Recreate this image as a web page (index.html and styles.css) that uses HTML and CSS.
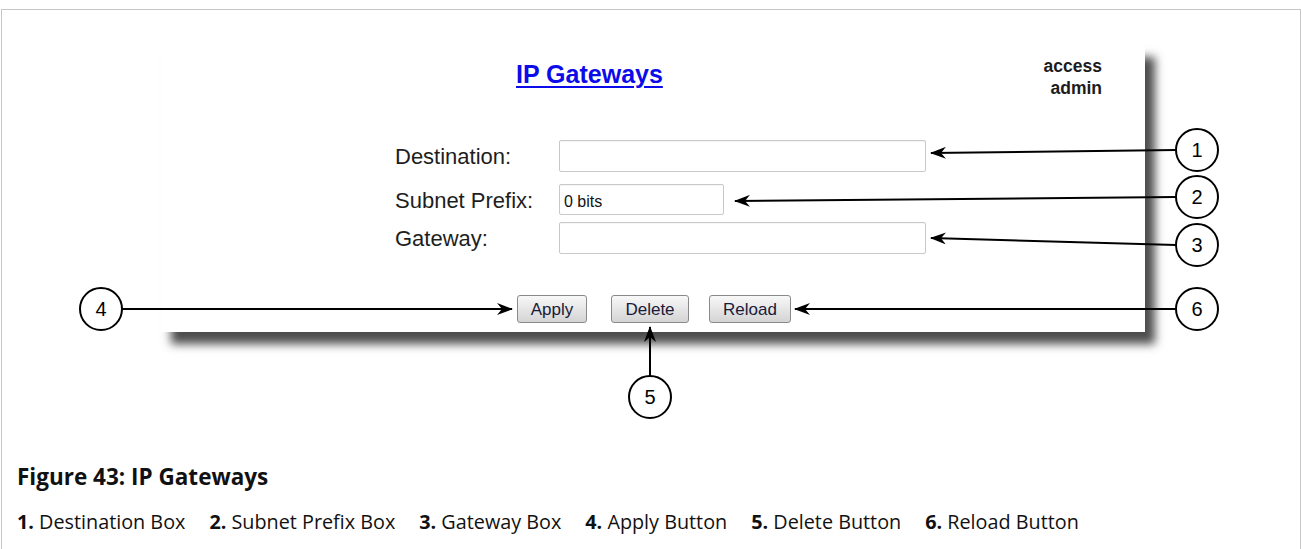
FILE: index.html
```html
<!DOCTYPE html>
<html lang="en">
<head>
    <meta charset="UTF-8">
    <meta name="viewport" content="width=device-width, initial-scale=1.0">
    <title>IP Gateways</title>
    <link rel="stylesheet" href="styles.css">
</head>
<body>
    <div class="figure">
        <div class="shot">
            <div class="shot-head">
                <a class="title" href="#">IP Gateways</a>
                <div class="user">access<br>admin</div>
            </div>

            <div class="form">
                <div class="row row-first">
                    <label for="dest">Destination:</label>
                    <input type="text" id="dest" class="wide">
                </div>
                <div class="row row-second">
                    <label for="prefix">Subnet Prefix:</label>
                    <input type="text" id="prefix" class="short" value="0 bits">
                </div>
                <div class="row">
                    <label for="gw">Gateway:</label>
                    <input type="text" id="gw" class="wide">
                </div>
            </div>

            <div class="buttons">
                <button class="btn btn-apply">Apply</button>
                <button class="btn btn-delete">Delete</button>
                <button class="btn btn-reload">Reload</button>
            </div>
        </div>

        <div class="caption">
            <h2>Figure 43: IP Gateways</h2>
            <ul class="legend">
                <li><b>1.</b> Destination Box</li>
                <li><b>2.</b> Subnet Prefix Box</li>
                <li><b>3.</b> Gateway Box</li>
                <li><b>4.</b> Apply Button</li>
                <li><b>5.</b> Delete Button</li>
                <li><b>6.</b> Reload Button</li>
            </ul>
        </div>
    </div>

    <!-- callouts drawn over the screenshot -->
    <svg class="callouts" width="1301" height="549" viewBox="0 0 1301 549">
        <defs>
            <marker id="head" viewBox="0 0 16 12" refX="15" refY="6" markerWidth="16" markerHeight="12" orient="auto" markerUnits="userSpaceOnUse">
                <path d="M0 0 L16 6 L0 12 L5 6 Z" fill="#000"/>
            </marker>
        </defs>
        <g stroke="#000" stroke-width="2" fill="none">
            <line x1="1176" y1="150" x2="931" y2="153" marker-end="url(#head)"/>
            <line x1="1176" y1="197" x2="735" y2="201" marker-end="url(#head)"/>
            <line x1="1176" y1="245" x2="931" y2="238" marker-end="url(#head)"/>
            <line x1="122" y1="309" x2="512" y2="309" marker-end="url(#head)"/>
            <line x1="650" y1="376" x2="650" y2="327" marker-end="url(#head)"/>
            <line x1="1176" y1="309" x2="795" y2="309" marker-end="url(#head)"/>
        </g>
        <g class="marks" stroke="#000" stroke-width="2" fill="#fff">
            <circle cx="1197" cy="150" r="21"/>
            <circle cx="1197" cy="197" r="21"/>
            <circle cx="1197" cy="245" r="21"/>
            <circle cx="101" cy="309" r="21"/>
            <circle cx="650" cy="397" r="21"/>
            <circle cx="1197" cy="309" r="21"/>
        </g>
        <g class="nums">
            <text x="1197" y="157">1</text>
            <text x="1197" y="204">2</text>
            <text x="1197" y="252">3</text>
            <text x="101" y="316">4</text>
            <text x="650" y="404">5</text>
            <text x="1197" y="316">6</text>
        </g>
    </svg>
</body>
</html>
```

FILE: styles.css
```css
body {
    margin: 0;
    font-family: "Liberation Sans", Arial, sans-serif;
    background-color: #fff;
    position: relative;
}

.figure {
    margin: 9px 0 0 1px;
    height: 540px;
    border: 1px solid #c6c6c6;
    border-bottom: none;
    box-sizing: border-box;
    overflow: hidden;
    padding-top: 35px;
}

/* the screenshot panel */
.shot {
    margin-left: 159px;
    width: 984px;
    height: 287px;
    background-color: white;
    box-shadow: 10px 12px 9px rgba(0, 0, 0, 0.7);
    position: relative;
}

.shot-head {
    display: flex;
    justify-content: space-between;
    align-items: flex-start;
    padding: 15px 43px 0 355px;
}

.title {
    font-size: 25px;
    line-height: 28px;
    font-weight: bold;
    color: #0c0cea;
    text-decoration: underline;
    text-decoration-thickness: 2px;
    text-underline-offset: 3px;
}

.user {
    font-size: 17.5px;
    line-height: 22px;
    font-weight: bold;
    color: #1c1c1c;
    text-align: right;
    margin-top: -5px;
}

.form {
    margin-top: 41px;
    padding-left: 234px;
}

.row {
    display: flex;
    align-items: center;
}

.row-first {
    margin-bottom: 12px;
}

.row-second {
    margin-bottom: 7px;
}

label {
    width: 164px;
    font-size: 22px;
    color: #1e1e1e;
    padding-top: 2px;
}

input {
    box-sizing: border-box;
    height: 31px;
    border: 1px solid #c9c9c9;
    border-radius: 2px;
    font-family: "Liberation Sans", Arial, sans-serif;
    font-size: 16px;
    color: #111;
    padding: 4px 4px 0;
    margin: 0;
    box-shadow: inset 0 1px 1px rgba(0, 0, 0, 0.04);
}

.wide {
    width: 367px;
    height: 32px;
}

.short {
    width: 165px;
}

.buttons {
    display: flex;
    margin-top: 41px;
    padding-left: 356px;
}

.btn {
    height: 28px;
    padding: 2px 0 0;
    font-family: "Liberation Sans", Arial, sans-serif;
    font-size: 17px;
    color: #1a1a3a;
    background: linear-gradient(#f8f8f8, #e4e4e4 55%, #d4d4d4);
    border: 1px solid #8a8a8a;
    border-radius: 3px;
}

.btn-apply {
    width: 70px;
    margin-right: 24px;
}

.btn-delete {
    width: 78px;
    margin-right: 20px;
}

.btn-reload {
    width: 82px;
}

.caption {
    margin-top: 131px;
    padding-left: 15px;
    font-family: "Open Sans", sans-serif;
    color: #111;
}

.caption h2 {
    margin: 0;
    font-size: 22.5px;
    line-height: 28px;
    font-weight: bold;
}

.legend {
    list-style: none;
    margin: 18px 0 0;
    padding: 0;
    display: flex;
    gap: 24px;
    font-size: 19.8px;
    line-height: 26px;
}

.legend b {
    font-weight: bold;
}

.callouts {
    position: absolute;
    top: 0;
    left: 0;
}

.nums text {
    font-family: "Liberation Sans", Arial, sans-serif;
    font-size: 20px;
    text-anchor: middle;
    fill: #000;
}
```
